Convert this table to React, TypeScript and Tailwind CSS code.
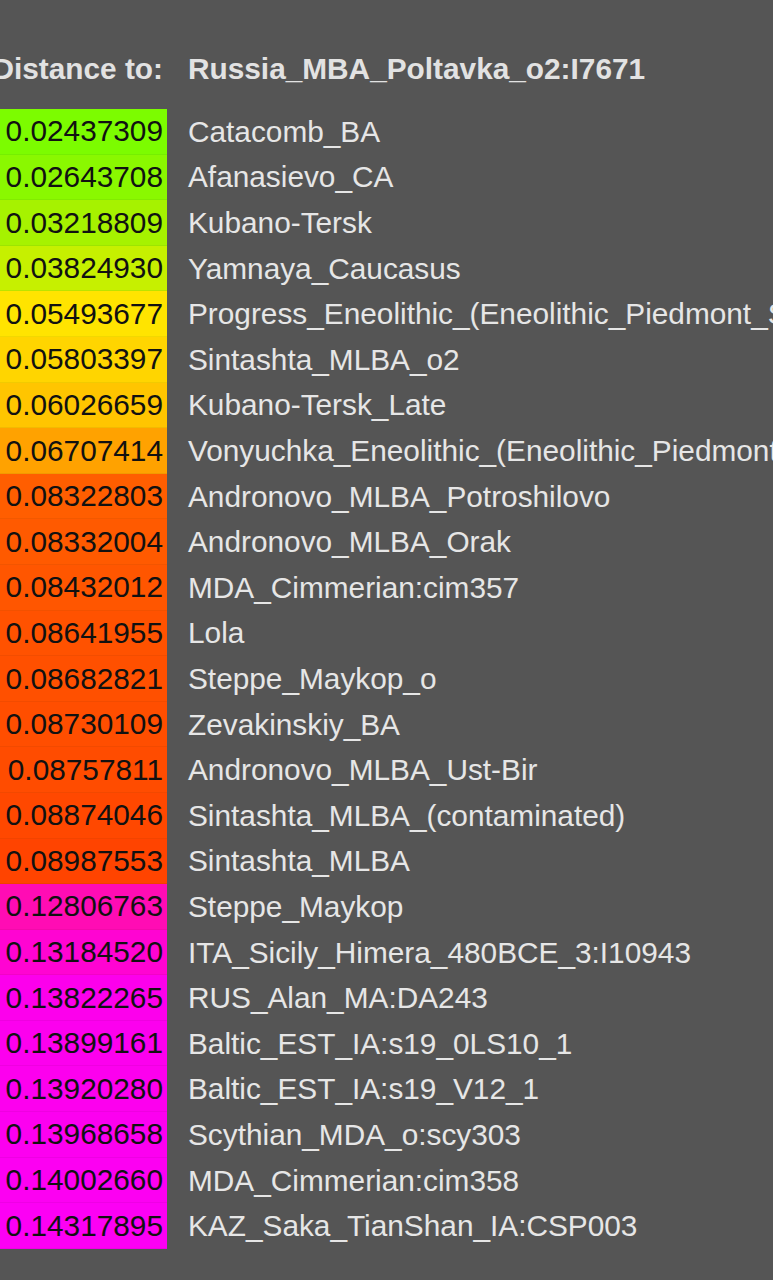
const rows: { d: string; name: string; bg: string }[] = [
  { d: '0.02437309', name: 'Catacomb_BA', bg: 'bg-[#7cfc00]' },
  { d: '0.02643708', name: 'Afanasievo_CA', bg: 'bg-[#8af800]' },
  { d: '0.03218809', name: 'Kubano-Tersk', bg: 'bg-[#a6f200]' },
  { d: '0.03824930', name: 'Yamnaya_Caucasus', bg: 'bg-[#c6f000]' },
  { d: '0.05493677', name: 'Progress_Eneolithic_(Eneolithic_Piedmont_Steppe)', bg: 'bg-[#ffe400]' },
  { d: '0.05803397', name: 'Sintashta_MLBA_o2', bg: 'bg-[#ffd500]' },
  { d: '0.06026659', name: 'Kubano-Tersk_Late', bg: 'bg-[#ffc500]' },
  { d: '0.06707414', name: 'Vonyuchka_Eneolithic_(Eneolithic_Piedmont_Steppe)', bg: 'bg-[#ffa200]' },
  { d: '0.08322803', name: 'Andronovo_MLBA_Potroshilovo', bg: 'bg-[#ff5e00]' },
  { d: '0.08332004', name: 'Andronovo_MLBA_Orak', bg: 'bg-[#ff5a00]' },
  { d: '0.08432012', name: 'MDA_Cimmerian:cim357', bg: 'bg-[#ff5600]' },
  { d: '0.08641955', name: 'Lola', bg: 'bg-[#ff5200]' },
  { d: '0.08682821', name: 'Steppe_Maykop_o', bg: 'bg-[#ff5000]' },
  { d: '0.08730109', name: 'Zevakinskiy_BA', bg: 'bg-[#ff4e00]' },
  { d: '0.08757811', name: 'Andronovo_MLBA_Ust-Bir', bg: 'bg-[#ff4c00]' },
  { d: '0.08874046', name: 'Sintashta_MLBA_(contaminated)', bg: 'bg-[#ff4800]' },
  { d: '0.08987553', name: 'Sintashta_MLBA', bg: 'bg-[#ff4400]' },
  { d: '0.12806763', name: 'Steppe_Maykop', bg: 'bg-[#ff0cb4]' },
  { d: '0.13184520', name: 'ITA_Sicily_Himera_480BCE_3:I10943', bg: 'bg-[#ff04d2]' },
  { d: '0.13822265', name: 'RUS_Alan_MA:DA243', bg: 'bg-[#fc00ec]' },
  { d: '0.13899161', name: 'Baltic_EST_IA:s19_0LS10_1', bg: 'bg-[#fc00ee]' },
  { d: '0.13920280', name: 'Baltic_EST_IA:s19_V12_1', bg: 'bg-[#fc00ee]' },
  { d: '0.13968658', name: 'Scythian_MDA_o:scy303', bg: 'bg-[#fc00f0]' },
  { d: '0.14002660', name: 'MDA_Cimmerian:cim358', bg: 'bg-[#fc00f2]' },
  { d: '0.14317895', name: 'KAZ_Saka_TianShan_IA:CSP003', bg: 'bg-[#fc00f4]' },
];

export default function App() {
  return (
    <div className="min-h-[1280px] w-[773px] overflow-hidden bg-[#555555] font-['Liberation_Sans',Arial,sans-serif] text-[29.8px] leading-none whitespace-nowrap">
      <div className="pt-[46px]">
        <div className="flex h-[46px] items-center font-bold text-[#e2e2e2]">
          <div className="w-[167px] shrink-0 pr-[4px] flex justify-end">
            <span>Distance to:</span>
          </div>
          <div className="pl-[21px]">Russia_MBA_Poltavka_o2:I7671</div>
        </div>
        <div className="mt-[17px] flex flex-col">
          {rows.map((r) => (
            <div key={r.d} className="flex h-[45.6px] items-stretch">
              <div
                className={`${r.bg} w-[167px] shrink-0 pr-[4px] flex items-center justify-end text-[#111] border-b border-black/5`}
              >
                {r.d}
              </div>
              <div className="pl-[21px] flex items-center text-[#e6e6e6]">{r.name}</div>
            </div>
          ))}
        </div>
      </div>
    </div>
  );
}
